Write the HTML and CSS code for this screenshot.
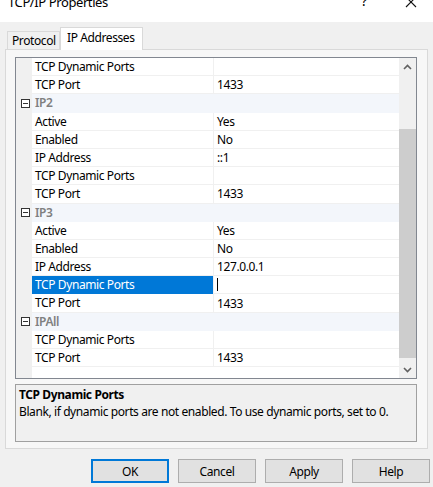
FILE: index.html
```html
<!DOCTYPE html>
<html>
<head>
<meta charset="utf-8">
<link rel="stylesheet" href="styles.css">
</head>
<body>
<div class="titlebar">
  <span class="title">TCP/IP Properties</span>
  <span class="help-q">?</span>
  <svg class="close-x" width="12" height="12" viewBox="0 0 12 12"><path d="M1 1 L11 11 M11 1 L1 11" stroke="#111" stroke-width="1.1" fill="none"/></svg>
</div>
<div class="tabs">
  <div class="tab">Protocol</div>
  <div class="tab active">IP Addresses</div>
</div>
<div class="panel">
  <div class="grid">
    <div class="rows">
      <div class="row"><div class="gut"></div><div class="name">TCP Dynamic Ports</div><div class="val"></div></div>
      <div class="row"><div class="gut"></div><div class="name">TCP Port</div><div class="val">1433</div></div>
      <div class="row cat"><div class="gut"><span class="minus"></span></div><div class="cname">IP2</div></div>
      <div class="row"><div class="gut"></div><div class="name">Active</div><div class="val">Yes</div></div>
      <div class="row"><div class="gut"></div><div class="name">Enabled</div><div class="val">No</div></div>
      <div class="row"><div class="gut"></div><div class="name">IP Address</div><div class="val">::1</div></div>
      <div class="row"><div class="gut"></div><div class="name">TCP Dynamic Ports</div><div class="val"></div></div>
      <div class="row"><div class="gut"></div><div class="name">TCP Port</div><div class="val">1433</div></div>
      <div class="row cat"><div class="gut"><span class="minus"></span></div><div class="cname">IP3</div></div>
      <div class="row"><div class="gut"></div><div class="name">Active</div><div class="val">Yes</div></div>
      <div class="row"><div class="gut"></div><div class="name">Enabled</div><div class="val">No</div></div>
      <div class="row"><div class="gut"></div><div class="name">IP Address</div><div class="val">127.0.0.1</div></div>
      <div class="row sel"><div class="gut"></div><div class="name">TCP Dynamic Ports</div><div class="val"><span class="caret"></span></div></div>
      <div class="row"><div class="gut"></div><div class="name">TCP Port</div><div class="val">1433</div></div>
      <div class="row cat"><div class="gut"><span class="minus"></span></div><div class="cname">IPAll</div></div>
      <div class="row"><div class="gut"></div><div class="name">TCP Dynamic Ports</div><div class="val"></div></div>
      <div class="row"><div class="gut"></div><div class="name">TCP Port</div><div class="val">1433</div></div>
      <div class="filler"><div class="gut"></div></div>
    </div>
    <div class="scrollbar">
      <div class="arrow"><svg width="9" height="6" viewBox="0 0 9 6"><path d="M1 5 L4.5 1.5 L8 5" stroke="#606060" stroke-width="1.6" fill="none"/></svg></div>
      <div class="track"><div class="thumb"></div></div>
      <div class="arrow"><svg width="9" height="6" viewBox="0 0 9 6"><path d="M1 1 L4.5 4.5 L8 1" stroke="#606060" stroke-width="1.6" fill="none"/></svg></div>
    </div>
  </div>
  <div class="desc">
    <div class="desc-title">TCP Dynamic Ports</div>
    <div class="desc-text">Blank, if dynamic ports are not enabled. To use dynamic ports, set to 0.</div>
  </div>
</div>
<div class="buttons">
  <button class="btn default">OK</button>
  <button class="btn">Cancel</button>
  <button class="btn">Apply</button>
  <button class="btn">Help</button>
</div>
</body>
</html>
```
FILE: styles.css
```css
* { box-sizing: border-box; }
html, body { margin: 0; padding: 0; }
body {
  width: 433px;
  height: 487px;
  overflow: hidden;
  background: #f0f0f0;
  font-family: "Noto Sans", "Open Sans", sans-serif;
  font-size: 12px;
  letter-spacing: -0.4px;
  color: #000;
}
.titlebar {
  height: 22px;
  background: #ffffff;
  display: flex;
  align-items: flex-start;
  overflow: hidden;
}
.title {
  margin-top: -7px;
  margin-left: 8px;
  font-size: 13px;
  line-height: 18px;
  flex: 1;
}
.help-q {
  margin-top: -9px;
  font-size: 14px;
  line-height: 20px;
  margin-right: 38px;
}
.close-x {
  margin-top: -4px;
  margin-right: 16px;
}
.tabs {
  display: flex;
  align-items: flex-end;
  height: 27px;
  padding-left: 7px;
}
.tab {
  height: 18px;
  width: 53px;
  border: 1px solid #d9d9d9;
  border-bottom: none;
  background: #f0f0f0;
  padding-left: 4px;
  line-height: 17px;
}
.tab.active {
  height: 23px;
  width: 83px;
  background: #ffffff;
  margin-bottom: -1px;
  position: relative;
  z-index: 1;
  padding-left: 6px;
  line-height: 19px;
}
.panel {
  margin: 0 5px;
  height: 400px;
  border: 1px solid #d9d9d9;
  background: #f7f7f7;
  padding: 7px 10px 0 9px;
}
.grid {
  height: 322px;
  border: 1px solid #828790;
  background: #ffffff;
  display: flex;
}
.rows {
  flex: 1;
  display: flex;
  flex-direction: column;
}
.row {
  display: flex;
  height: 18.2px;
  flex: none;
}
.gut {
  width: 16px;
  flex: none;
  background: #f0f0f0;
  display: flex;
  align-items: center;
  justify-content: center;
}
.name {
  width: 181px;
  flex: none;
  padding-left: 3px;
  line-height: 17px;
  border-bottom: 1px solid #f0f0f0;
  white-space: nowrap;
}
.val {
  flex: 1;
  border-left: 1px solid #f0f0f0;
  border-bottom: 1px solid #f0f0f0;
  padding-left: 3px;
  line-height: 17px;
  display: flex;
  align-items: center;
}
.cat {
  background: #f3f6fb;
}
.cname {
  flex: 1;
  padding-left: 3px;
  line-height: 18px;
  font-weight: 600;
  color: #808080;
}
.minus {
  width: 9px;
  height: 9px;
  border: 1px solid #333;
  background: #fff;
  position: relative;
  margin-left: 2px;
}
.minus::after {
  content: "";
  position: absolute;
  left: 1px;
  right: 1px;
  top: 3px;
  height: 1px;
  background: #333;
}
.sel .name {
  background: #0078d7;
  color: #fff;
  border-bottom-color: #0078d7;
}
.caret {
  width: 1px;
  height: 13px;
  background: #000;
}
.filler {
  flex: 1;
  display: flex;
}
.scrollbar {
  width: 17px;
  flex: none;
  background: #f0f0f0;
  display: flex;
  flex-direction: column;
}
.arrow {
  height: 17px;
  display: flex;
  align-items: center;
  justify-content: center;
}
.track {
  flex: 1;
  padding-top: 54px;
  padding-bottom: 3px;
  display: flex;
  flex-direction: column;
}
.thumb {
  flex: 1;
  background: #cdcdcd;
}
.desc {
  margin-top: 5px;
  height: 58px;
  border: 1px solid #a0a0a0;
  background: #f0f0f0;
  padding: 1px 3px;
}
.desc-title {
  font-weight: bold;
  line-height: 17px;
}
.desc-text {
  line-height: 17px;
}
.buttons {
  display: flex;
  justify-content: flex-end;
  gap: 9px;
  padding-right: 3px;
  margin-top: 10px;
}
.btn {
  width: 78px;
  height: 24px;
  border: 1px solid #adadad;
  background: #e1e1e1;
  font-family: inherit;
  font-size: 12px;
  letter-spacing: -0.4px;
  color: #000;
  padding: 0;
}
.btn.default {
  border: 2px solid #0078d7;
}
```
